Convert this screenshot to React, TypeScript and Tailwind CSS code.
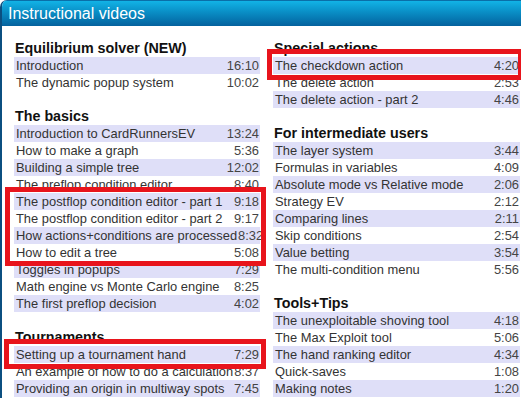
import React from 'react';

type Video = [string, string];
type Section = { title: string; videos: Video[] };

const leftColumn: Section[] = [
  {
    title: 'Equilibrium solver (NEW)',
    videos: [
      ['Introduction', '16:10'],
      ['The dynamic popup system', '10:02'],
    ],
  },
  {
    title: 'The basics',
    videos: [
      ['Introduction to CardRunnersEV', '13:24'],
      ['How to make a graph', '5:36'],
      ['Building a simple tree', '12:02'],
      ['The preflop condition editor', '8:40'],
      ['The postflop condition editor - part 1', '9:18'],
      ['The postflop condition editor - part 2', '9:17'],
      ['How actions+conditions are processed', '8:32'],
      ['How to edit a tree', '5:08'],
      ['Toggles in popups', '7:29'],
      ['Math engine vs Monte Carlo engine', '8:25'],
      ['The first preflop decision', '4:02'],
    ],
  },
  {
    title: 'Tournaments',
    videos: [
      ['Setting up a tournament hand', '7:29'],
      ['An example of how to do a calculation', '8:37'],
      ['Providing an origin in multiway spots', '7:45'],
    ],
  },
];

const rightColumn: Section[] = [
  {
    title: 'Special actions',
    videos: [
      ['The checkdown action', '4:20'],
      ['The delete action', '2:53'],
      ['The delete action - part 2', '4:46'],
    ],
  },
  {
    title: 'For intermediate users',
    videos: [
      ['The layer system', '3:44'],
      ['Formulas in variables', '4:09'],
      ['Absolute mode vs Relative mode', '2:06'],
      ['Strategy EV', '2:12'],
      ['Comparing lines', '2:11'],
      ['Skip conditions', '2:54'],
      ['Value betting', '3:54'],
      ['The multi-condition menu', '5:56'],
    ],
  },
  {
    title: 'Tools+Tips',
    videos: [
      ['The unexploitable shoving tool', '4:18'],
      ['The Max Exploit tool', '5:06'],
      ['The hand ranking editor', '4:34'],
      ['Quick-saves', '1:08'],
      ['Making notes', '1:20'],
    ],
  },
];

const VideoSection = ({ section }: { section: Section }) => (
  <div className="flex flex-col">
    <h3 className="h-[17px] leading-[17px] text-[14.3px] font-bold text-[#111] pl-[1px]">
      {section.title}
    </h3>
    {section.videos.map(([name, time], i) => (
      <div
        key={name}
        className={
          'h-[17px] leading-[17px] flex justify-between items-center pl-[2px] pr-[1px] text-[12.9px] text-[#333] ' +
          (i % 2 === 0 ? 'bg-[#dfdff8]' : 'bg-white')
        }
      >
        <span className="whitespace-nowrap">{name}</span>
        <span className="shrink-0 pl-[1px] text-[#444]">{time}</span>
      </div>
    ))}
  </div>
);

const Column = ({ sections }: { sections: Section[] }) => (
  <div className="flex flex-col gap-[17px]">
    {sections.map((s) => (
      <VideoSection key={s.title} section={s} />
    ))}
  </div>
);

export default function App() {
  return (
    <div className="relative w-[521px] h-[398px] overflow-hidden bg-white font-['Liberation_Sans',Arial,sans-serif]">
      <div className="h-full flex flex-col border-l-2 border-[#0b4f80] rounded-tl-[7px] overflow-hidden">
        {/* Title bar */}
        <div className="h-[26px] shrink-0 border-t border-[#0a6fa8] bg-gradient-to-b from-[#12b3e6] to-[#05629e] text-white text-[16px] leading-none pl-[6px] flex items-center">
          Instructional videos
        </div>

        {/* Video lists */}
        <div className="grid grid-cols-[246px_247px] gap-x-[13px] pl-[12px] pt-[14px]">
          <Column sections={leftColumn} />
          <Column sections={rightColumn} />
        </div>
      </div>

      {/* Highlight boxes */}
      <div className="absolute left-[267px] top-[49px] w-[256px] h-[31px] border-[5px] border-[#e8141c]" />
      <div className="absolute left-[5px] top-[187px] w-[261px] h-[79px] border-[5px] border-[#e8141c]" />
      <div className="absolute left-[4px] top-[339px] w-[262px] h-[30px] border-[5px] border-[#e8141c]" />
    </div>
  );
}
